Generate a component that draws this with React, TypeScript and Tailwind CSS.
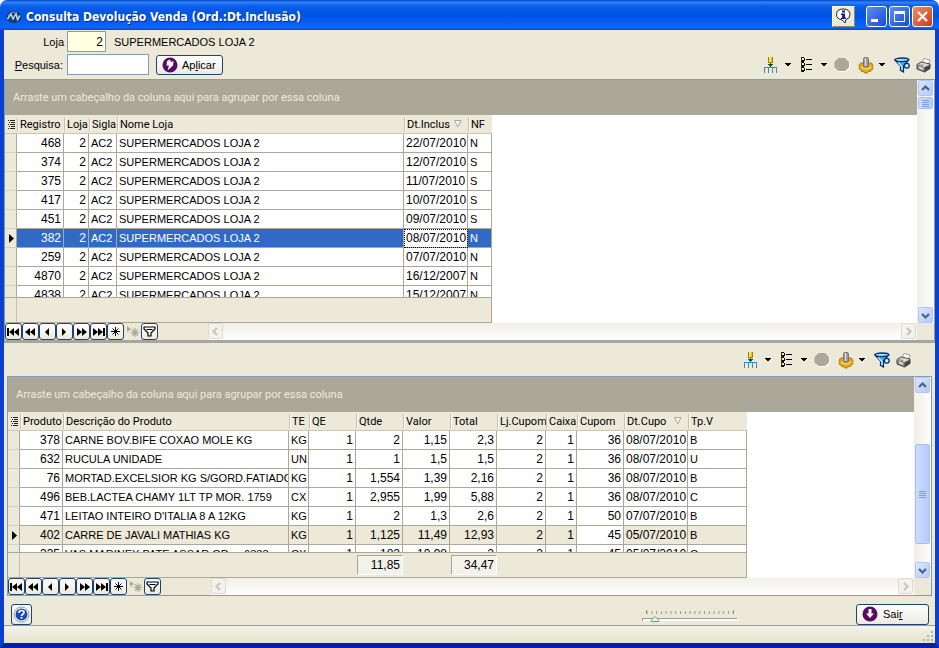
import React from 'react';
import clsx from 'clsx';

type Column = {
    label: string;
    width: string;
    align?: 'right';
    sorted?: boolean;
    total?: string;
};

const salesColumns: Column[] = [
    { label: 'Registro', width: 'w-[47px]', align: 'right' },
    { label: 'Loja', width: 'w-[25px]', align: 'right' },
    { label: 'Sigla', width: 'w-[28px]' },
    { label: 'Nome Loja', width: 'w-[287px]' },
    { label: 'Dt.Inclus', width: 'w-[64px]', sorted: true },
    { label: 'NF', width: 'w-[24px]' },
];

const salesRows = [
    ['468', '2', 'AC2', 'SUPERMERCADOS LOJA 2', '22/07/2010', 'N'],
    ['374', '2', 'AC2', 'SUPERMERCADOS LOJA 2', '12/07/2010', 'S'],
    ['375', '2', 'AC2', 'SUPERMERCADOS LOJA 2', '11/07/2010', 'S'],
    ['417', '2', 'AC2', 'SUPERMERCADOS LOJA 2', '10/07/2010', 'S'],
    ['451', '2', 'AC2', 'SUPERMERCADOS LOJA 2', '09/07/2010', 'S'],
    ['382', '2', 'AC2', 'SUPERMERCADOS LOJA 2', '08/07/2010', 'N'],
    ['259', '2', 'AC2', 'SUPERMERCADOS LOJA 2', '07/07/2010', 'N'],
    ['4870', '2', 'AC2', 'SUPERMERCADOS LOJA 2', '16/12/2007', 'N'],
    ['4838', '2', 'AC2', 'SUPERMERCADOS LOJA 2', '15/12/2007', 'N'],
];

const itemColumns: Column[] = [
    { label: 'Produto', width: 'w-[43px]', align: 'right' },
    { label: 'Descrição do Produto', width: 'w-[226px]' },
    { label: 'TE', width: 'w-[20px]' },
    { label: 'QE', width: 'w-[47px]', align: 'right' },
    { label: 'Qtde', width: 'w-[47px]', align: 'right', total: '11,85' },
    { label: 'Valor', width: 'w-[47px]', align: 'right' },
    { label: 'Total', width: 'w-[47px]', align: 'right', total: '34,47' },
    { label: 'Lj.Cupom', width: 'w-[49px]', align: 'right' },
    { label: 'Caixa', width: 'w-[31px]', align: 'right' },
    { label: 'Cupom', width: 'w-[47px]', align: 'right' },
    { label: 'Dt.Cupo', width: 'w-[64px]', sorted: true },
    { label: 'Tp.V', width: 'w-[59px]' },
];

const itemRows = [
    ['378', 'CARNE BOV.BIFE COXAO MOLE KG', 'KG', '1', '2', '1,15', '2,3', '2', '1', '36', '08/07/2010', 'B'],
    ['632', 'RUCULA UNIDADE', 'UN', '1', '1', '1,5', '1,5', '2', '1', '36', '08/07/2010', 'U'],
    ['76', 'MORTAD.EXCELSIOR KG S/GORD.FATIADO', 'KG', '1', '1,554', '1,39', '2,16', '2', '1', '36', '08/07/2010', 'B'],
    ['496', 'BEB.LACTEA CHAMY 1LT TP MOR. 1759', 'CX', '1', '2,955', '1,99', '5,88', '2', '1', '36', '08/07/2010', 'C'],
    ['471', "LEITAO INTEIRO D'ITALIA 8 A 12KG", 'KG', '1', '2', '1,3', '2,6', '2', '1', '50', '07/07/2010', 'B'],
    ['402', 'CARRE DE JAVALI MATHIAS KG', 'KG', '1', '1,125', '11,49', '12,93', '2', '1', '45', '05/07/2010', 'B'],
    ['335', 'VAS MARINEX PATE ASSAR GD \u00a0\u00a0\u00a0 6333', 'CX', '1', '182', '10,98', '2', '2', '1', '45', '05/07/2010', 'C'],
];

/* ---------- icons ---------- */

const Caret = () => (
    <svg width="8" height="4" viewBox="0 0 8 4" shapeRendering="crispEdges">
        <path d="M1 0h6v1H1zM2 1h4v1H2zM3 2h2v1H3z" fill="#000" />
    </svg>
);

const GroupIcon = () => (
    <svg width="16" height="18" viewBox="0 0 16 18" shapeRendering="crispEdges">
        <path d="M6 1h5v6H6z" fill="#e8b820" />
        <path d="M7 1h2v5H7z" fill="#ffe860" />
        <path d="M6 1h1v6H6zM10 1h1v6h-1zM7 6h3v1H7z" fill="#a87818" />
        <path d="M8 7h1v5H8zM6 8h5v1H6zM7 9h3v1H7z" fill="#0b5b20" />
        <path d="M2 11h13v1H2zM2 12h1v5H2zM6 12h1v5H6zM10 12h1v5h-1zM14 12h1v5h-1z" fill="#2f8fc4" />
    </svg>
);

const ListIcon = () => (
    <svg width="16" height="18" viewBox="0 0 16 18" shapeRendering="crispEdges">
        {[1, 6, 11].map((y) => (
            <g key={y}>
                <path d={`M3 ${y}h3v1h1v3h-1v1h-3z`} fill="#000" />
                <path d={`M4 ${y + 1}h2v2h-2z`} fill="#ffff40" />
                <path d={`M8 ${y + 2}h6v1h-6z`} fill="#000" />
            </g>
        ))}
        <path d="M3 1h1v15H3z" fill="#333" />
    </svg>
);

const StopIcon = () => (
    <svg width="16" height="16" viewBox="0 0 16 16">
        <path d="M5 2h7l4 4v5l-4 4H5l-3-3V5z" fill="#fff" />
        <path d="M4.500 1h6.500l4 4v5.500l-4 3.500H4.500L.5 10.500V5z" fill="#aca899" />
    </svg>
);

const GearIcon = () => (
    <svg width="16" height="18" viewBox="0 0 16 18">
        <path
            d="M1 9.500l1.500-2.500h2L6 5.500h4L11.500 7h2L15 9.500l-.5 2 .5 1.500-2 1-.5 1.500h-2L9.500 17h-3l-1-1.500h-2L3 14l-2-1 .5-1.500z"
            fill="#e5a81c"
            stroke="#a06a08"
            strokeWidth="0.8"
        />
        <path d="M3 11q5 4 10 0" stroke="#ffe27a" strokeWidth="1.200" fill="none" />
        <rect x="5.500" y="1.500" width="5" height="9.500" rx="1.500" fill="#9a9a9a" stroke="#666" strokeWidth="0.8" />
        <path d="M7.500 2v8" stroke="#ddd" strokeWidth="1.200" />
    </svg>
);

const FilterIcon = () => (
    <svg width="16" height="16" viewBox="0 0 16 16">
        <path d="M1 3l5.500 6v4.500l3 1.500V9l5-6z" fill="#38b6e8" stroke="#082a70" strokeWidth="1.200" />
        <path d="M4 5l4 5v3" stroke="#c7f4ff" strokeWidth="1.300" fill="none" />
        <ellipse cx="7.800" cy="2.800" rx="7" ry="1.800" fill="#8be0f5" stroke="#082a70" strokeWidth="1.300" />
        <circle cx="12.800" cy="8.800" r="2.400" stroke="#082a70" strokeWidth="1.300" fill="#dff3fb" />
    </svg>
);

const PrinterIcon = () => (
    <svg width="16" height="16" viewBox="0 0 16 16">
        <path d="M6 6l2-4.500 6 1.500-1.500 5z" fill="#fff" stroke="#888" strokeWidth="0.8" />
        <path d="M1 7.500l4-2.500 9 2v4.500L8.500 15 1 12z" fill="#8d8d8d" stroke="#333" strokeWidth="0.9" />
        <path d="M1.500 7.500l4-2 8 2-5 2.500z" fill="#d8d8d8" />
        <path d="M8.500 10.500V15l5.500-3.500V8z" fill="#444" />
        <path d="M3 9.500l4 1.500v2L3 11.500z" fill="#ddd" />
        <rect x="3" y="7" width="1.500" height="1.200" fill="#3c3" />
        <rect x="5.500" y="7.800" width="1.500" height="1.200" fill="#e33" />
    </svg>
);

const ColumnsIcon = () => (
    <svg width="7" height="9" viewBox="0 0 7 9" shapeRendering="crispEdges">
        <path d="M0 0h1v1H0zM2 0h5v1H2zM1 2h1v1H1zM3 2h4v1H3zM0 4h1v1H0zM2 4h5v1H2zM1 6h1v1H1zM3 6h4v1H3zM0 8h1v1H0zM2 8h5v1H2z" fill="#222" />
    </svg>
);

const SortIcon = () => (
    <svg width="8" height="8" viewBox="0 0 8 8" className="mr-[6px] shrink-0">
        <path d="M.5 .5h6.500l-3.200 6.500z" fill="#f8f7f0" stroke="#aca899" />
    </svg>
);

const AppIcon = () => (
    <svg width="16" height="16" viewBox="0 0 16 16">
        <ellipse cx="8" cy="8" rx="7.500" ry="6" fill="#163a6c" />
        <path d="M1.500 10l3.500-5 2 5 3-5.500 1.500 6L14 6.500" stroke="#b9dcf5" strokeWidth="1.500" fill="none" />
        <path d="M2 6.500q3-4 7-3.500" stroke="#7fa8d8" fill="none" />
    </svg>
);

const Chevron = ({ dir, off }: { dir: 'up' | 'down' | 'left' | 'right'; off?: boolean }) => {
    const d = {
        up: 'M1 6l3.500-3.500L8 6',
        down: 'M1 3l3.500 3.500L8 3',
        left: 'M6 1L2.500 4.500 6 8',
        right: 'M3 1l3.500 3.500L3 8',
    }[dir];
    return (
        <svg width="9" height="9" viewBox="0 0 9 9">
            <path d={d} fill="none" stroke={off ? '#c9c7ba' : '#4d6185'} strokeWidth="2.200" />
        </svg>
    );
};

/* ---------- navigator ---------- */

const navButtons = [
    { name: 'Primeiro', d: 'M0 1h2v8H0zM2 5l5-4v8zM7 5l5-4v8z' },
    { name: 'Página anterior', d: 'M1 5l5-4v8zM6 5l5-4v8z' },
    { name: 'Anterior', d: 'M4 5l4-4v8z' },
    { name: 'Próximo', d: 'M8 5L4 1v8z' },
    { name: 'Próxima página', d: 'M7 5L2 1v8zM12 5L7 1v8z' },
    { name: 'Último', d: 'M11 1h2v8h-2zM11 5L6 1v8zM6 5L1 1v8z' },
];

const navClass =
    'flex h-[17px] w-[17px] shrink-0 items-center justify-center rounded-[3px] border border-[#1c4470] bg-gradient-to-b from-white to-[#eceadf]';

const Navigator = () => (
    <div className="flex w-[203px] shrink-0">
        {navButtons.map((b) => (
            <button key={b.name} type="button" aria-label={b.name} className={navClass}>
                <svg width="13" height="10" viewBox="0 0 13 10" className="shrink-0">
                    <path d={b.d} fill="#000" />
                </svg>
            </button>
        ))}
        <button type="button" aria-label="Marcar" className={navClass}>
            <svg width="9" height="9" viewBox="0 0 9 9">
                <path d="M4.500 0v9M0 4.500h9M1.500 1.500l6 6M7.500 1.500l-6 6" stroke="#000" />
            </svg>
        </button>
        <button type="button" aria-label="Ir para marca" disabled className="flex h-[17px] w-[17px] items-center justify-center">
            <svg width="14" height="12" viewBox="0 0 14 12">
                <path d="M1 0l4 3-4 3z" fill="#aca899" />
                <path d="M9 2v9M4.500 6.500h9M6 3.500l6 6M12 3.500l-6 6" stroke="#aca899" strokeWidth="1.200" />
            </svg>
        </button>
        <button type="button" aria-label="Filtrar" className={navClass}>
            <svg width="13" height="11" viewBox="0 0 13 11" className="shrink-0">
                <path d="M1 1h11v2L8 7v3H5V7L1 3zM3.500 3.500h6" fill="none" stroke="#000" strokeWidth="1.200" />
            </svg>
        </button>
    </div>
);

/* ---------- scroll bars ---------- */

const ScrollButton = ({ dir, off }: { dir: 'up' | 'down' | 'left' | 'right'; off?: boolean }) => (
    <button
        type="button"
        aria-label={dir}
        className={clsx(
            'flex h-4 w-[15px] shrink-0 items-center justify-center rounded-[2px] border',
            off ? 'border-[#dddbd0] bg-[#f3f2ec]' : 'border-[#b3c6f3] bg-gradient-to-br from-[#dde7ff] to-[#b5c9f9]',
        )}
    >
        <Chevron dir={dir} off={off} />
    </button>
);

const VerticalScroll = ({ before, thumb, after }: { before: string; thumb: string; after: string }) => (
    <div className="flex w-[17px] shrink-0 flex-col items-center bg-gradient-to-r from-[#f0efe8] to-[#fdfdfb]">
        <ScrollButton dir="up" />
        <div className={before} />
        <div
            className={clsx(
                'flex w-[15px] flex-col items-center justify-center gap-px rounded-[2px] border border-[#a9bdf0] bg-gradient-to-r from-[#cddcff] to-[#b7cafa]',
                thumb,
            )}
        >
            {[0, 1, 2, 3].map((i) => (
                <div key={i} className="h-px w-[7px] bg-[#7f9fe8]" />
            ))}
        </div>
        <div className={after} />
        <ScrollButton dir="down" />
    </div>
);

const BottomRow = () => (
    <div className="flex h-[17px] shrink-0 bg-[#ece9d8] pr-[17px]">
        <Navigator />
        <div className="flex grow justify-between bg-gradient-to-b from-[#f0efe8] to-white pr-px">
            <ScrollButton dir="left" off />
            <ScrollButton dir="right" off />
        </div>
    </div>
);

/* ---------- grid ---------- */

type GridProps = {
    label: string;
    columns: Column[];
    rows: string[][];
    tableWidth: string;
    current: number;
    focusCol: number;
    selected?: boolean;
};

const Grid = ({ label, columns, rows, tableWidth, current, focusCol, selected }: GridProps) => (
    <div className="flex min-w-0 grow flex-col bg-white">
        <div className="flex h-[35px] shrink-0 items-center bg-[#aca899] px-2 pt-[2px] font-[Roboto,sans-serif] text-[11px] text-[#ece9d8]">
            Arraste um cabeçalho da coluna aqui para agrupar por essa coluna
        </div>
        <div className="min-h-0 grow overflow-hidden">
            <table aria-label={label} className={clsx('table-fixed border-separate border-spacing-0', tableWidth)}>
                <thead>
                    <tr className="h-[19px] bg-[#ece9d8] font-[Roboto,sans-serif]">
                        <th className="w-3 border-b border-[#cbc7b8] p-0 pl-[3px]">
                            <ColumnsIcon />
                        </th>
                        {columns.map((c) => (
                            <th key={c.label} className={clsx('border-b border-[#cbc7b8] p-0 text-left text-[11px] font-normal', c.width)}>
                                <div className="flex h-[15px] items-center border-l border-[#c5c1b0] pl-[2px] leading-[15px] shadow-[inset_1px_0_0_#fff]">
                                    <span className="grow overflow-hidden whitespace-nowrap">{c.label}</span>
                                    {c.sorted && <SortIcon />}
                                </div>
                            </th>
                        ))}
                    </tr>
                </thead>
                <tbody>
                    {rows.map((row, r) => (
                        <tr
                            key={row[0]}
                            className={clsx('h-[19px]', r === current && (selected ? 'bg-[#316ac5] text-white' : 'bg-[#ece9d8]'))}
                        >
                            <td className="border-r border-b border-[#aca899] border-b-[#d6d2c2] bg-[#ece9d8] p-0">
                                {r === current && (
                                    <svg width="6" height="9" viewBox="0 0 6 9" className="ml-1">
                                        <path d="M0 0l5 4.500L0 9z" fill="#000" />
                                    </svg>
                                )}
                            </td>
                            {row.map((value, i) => (
                                <td
                                    key={i}
                                    className={clsx(
                                        'overflow-hidden border-r border-b border-[#aca899] p-0 pl-[2px] leading-[18px] whitespace-nowrap',
                                        /[a-z]/i.test(value) ? 'text-[11px]' : 'text-[12px]',
                                        columns[i].align === 'right' && 'pr-[2px] text-right',
                                        r === current && i === focusCol && 'bg-white text-black',
                                        r === current && i === focusCol && selected && 'outline-1 -outline-offset-1 outline-dotted outline-black',
                                    )}
                                >
                                    {value}
                                </td>
                            ))}
                        </tr>
                    ))}
                </tbody>
            </table>
        </div>
        <div className={clsx('flex h-[26px] shrink-0 border-y border-r border-[#aca899] bg-[#ece9d8]', tableWidth)}>
            <div className="w-3 shrink-0 border-r border-[#c5c1b0]" />
            {columns.map((c) => (
                <div key={c.label} className={clsx('shrink-0 py-[2px] pl-px', c.width)}>
                    {c.total && (
                        <div className="h-5 border border-[#aca899] border-r-white border-b-white bg-[#f2f1ea] pr-[2px] text-right text-[12px] leading-[18px]">
                            {c.total}
                        </div>
                    )}
                </div>
            ))}
        </div>
    </div>
);

const Toolbar = () => (
    <div className="flex items-center">
        <button type="button" aria-label="Agrupar"><GroupIcon /></button>
        <button type="button" aria-label="Opções de grupo" className="mx-[6px]"><Caret /></button>
        <button type="button" aria-label="Colunas"><ListIcon /></button>
        <button type="button" aria-label="Opções de colunas" className="mx-[6px]"><Caret /></button>
        <button type="button" aria-label="Parar" className="mr-2"><StopIcon /></button>
        <button type="button" aria-label="Configurar"><GearIcon /></button>
        <button type="button" aria-label="Opções de configuração" className="mr-2 ml-1"><Caret /></button>
        <button type="button" aria-label="Filtro" className="mr-[6px]"><FilterIcon /></button>
        <button type="button" aria-label="Imprimir"><PrinterIcon /></button>
    </div>
);

const TitleBar = () => (
    <header className="flex h-[30px] shrink-0 items-center rounded-t-[7px] bg-[linear-gradient(180deg,#0a48c8_0%,#2a82f8_8%,#0a5ee8_20%,#0054e3_50%,#0862f5_82%,#0a66fa_92%,#0046cc_100%)] pt-[3px] pr-[6px] pl-[6px]">
        <AppIcon />
        <h1 className="ml-1 grow font-['DejaVu_Sans_Condensed','DejaVu_Sans',sans-serif] text-[12px] font-bold whitespace-nowrap text-white [text-shadow:1px_1px_0_#0a2a80]">
            Consulta Devolução Venda (Ord.:Dt.Inclusão)
        </h1>
        <button type="button" aria-label="Informações" className="mr-[11px] flex h-[21px] w-[23px] items-center justify-center border border-white border-r-[#8a8778] border-b-[#8a8778] bg-[#ece9d8]">
            <svg width="17" height="17" viewBox="0 0 17 17">
                <path d="M8 1q7 0 7 5.500 0 4-4 5L10 15l-3-3.200Q1.500 11 1.500 6.500 1.500 1 8 1z" fill="#fff" stroke="#222" />
                <path d="M7 2.500h3v2H7zM6 5.500h4v4h1v1.500H6V9.500h1.200V7H6z" fill="#1018a0" />
            </svg>
        </button>
        <div className="flex gap-[2px]">
            <button type="button" aria-label="Minimizar" className="h-[21px] w-[21px] rounded-[3px] border border-white bg-gradient-to-br from-[#5a8cf5] to-[#1a4cd0]">
                <svg width="19" height="19" viewBox="0 0 19 19"><path d="M4 12h7v3H4z" fill="#fff" /></svg>
            </button>
            <button type="button" aria-label="Maximizar" className="h-[21px] w-[21px] rounded-[3px] border border-white bg-gradient-to-br from-[#5a8cf5] to-[#1a4cd0]">
                <svg width="19" height="19" viewBox="0 0 19 19"><path d="M4 4h11v11H4zM5 7v7h9V7z" fill="#fff" fillRule="evenodd" /></svg>
            </button>
            <button type="button" aria-label="Fechar" className="h-[21px] w-[21px] rounded-[3px] border border-white bg-gradient-to-br from-[#f08a68] to-[#c83a10]">
                <svg width="19" height="19" viewBox="0 0 19 19"><path d="M5 5l9 9M14 5l-9 9" stroke="#fff" strokeWidth="2.200" /></svg>
            </button>
        </div>
    </header>
);

const buttonClass =
    'flex items-center rounded-[3px] border border-[#1c4470] bg-gradient-to-b from-white to-[#eceadf] text-[11px]';

export default function App() {
    return (
        <div className="flex h-screen flex-col overflow-hidden bg-white font-['Liberation_Sans',Arial,sans-serif] text-black">
            <TitleBar />
            <div className="flex min-h-0 grow flex-col border-x-4 border-b-[5px] border-[#0a3fd0] border-b-[#0a1fa8] bg-[#ece9d8]">
                <div className="flex h-[49px] shrink-0 items-end justify-between pr-[3px]">
                    <form className="flex flex-col gap-[2px] self-start pt-px text-[11px]">
                        <div className="flex h-[21px] items-center">
                            <label htmlFor="loja" className="w-[63px] pt-[2px] pr-[3px] text-right">Loja</label>
                            <input id="loja" defaultValue="2" className="h-[21px] w-[39px] border border-[#7f9db9] bg-[#ffffe1] pr-[2px] text-right text-[12px]" />
                            <span className="ml-2 pt-[2px]">SUPERMERCADOS LOJA 2</span>
                        </div>
                        <div className="flex h-[21px] items-center">
                            <label htmlFor="pesquisa" className="w-[63px] pt-[2px] pr-[4px] text-right">
                                <u>P</u>esquisa:
                            </label>
                            <input id="pesquisa" className="h-[21px] w-[82px] border border-[#7f9db9] bg-white px-1" />
                            <button type="button" className={clsx(buttonClass, 'ml-[7px] h-5 w-[67px] gap-1 pl-[5px]')}>
                                <svg width="16" height="16" viewBox="0 0 16 16">
                                    <circle cx="8" cy="8" r="7.500" fill="#5a0a62" />
                                    <path d="M8 2.500L5 4 4.500 8.500h2.500L5.500 13.500 11 8.500 11.500 4 9 5z" fill="#fff" />
                                </svg>
                                <span className="pt-px">Ap<u>l</u>icar</span>
                            </button>
                        </div>
                    </form>
                    <div className="pb-[5px]">
                        <Toolbar />
                    </div>
                </div>

                <section className="flex min-h-0 flex-[260] flex-col border border-b-0 border-[#7f9db9]">
                    <div className="flex min-h-0 grow">
                        <Grid
                            label="Devoluções"
                            columns={salesColumns}
                            rows={salesRows}
                            tableWidth="w-[487px]"
                            current={5}
                            focusCol={4}
                            selected
                        />
                        <VerticalScroll before="h-px" thumb="h-3" after="grow" />
                    </div>
                    <BottomRow />
                </section>

                <div className="flex h-9 shrink-0 items-center justify-end border-t-[3px] border-[#a3a79f] pr-[23px]">
                    <Toolbar />
                </div>

                <section className="mx-[3px] flex min-h-0 flex-[218] flex-col border border-[#7f9db9]">
                    <div className="flex min-h-0 grow">
                        <Grid
                            label="Itens"
                            columns={itemColumns}
                            rows={itemRows}
                            tableWidth="w-[739px]"
                            current={5}
                            focusCol={9}
                        />
                        <VerticalScroll before="flex-[51]" thumb="flex-[98]" after="flex-[18]" />
                    </div>
                    <BottomRow />
                </section>

                <div className="flex h-[30px] shrink-0 items-center border-b border-[#9d9a8b] pt-[7px] pr-[6px] pl-[7px]">
                    <button type="button" aria-label="Ajuda" className={clsx(buttonClass, 'h-[21px] w-[21px] justify-center')}>
                        <svg width="17" height="17" viewBox="0 0 17 17" className="shrink-0">
                            <circle cx="8.500" cy="8.500" r="7.500" fill="#fff" stroke="#8a9cc0" />
                            <circle cx="8.500" cy="8.500" r="6" fill="#1c48b8" />
                            <path d="M6 7q0-2.500 2.500-2.500T11 6.500q0 1-1.200 1.700T8.500 10" stroke="#fff" strokeWidth="1.700" fill="none" />
                            <path d="M7.600 11h1.800v1.700H7.600z" fill="#fff" />
                        </svg>
                    </button>
                    <label className="relative mr-[118px] ml-auto h-[15px] w-24">
                        <input type="range" aria-label="Zoom" defaultValue="10" className="absolute inset-0 h-full w-full opacity-0" />
                        <svg viewBox="0 0 96 15" className="h-full w-full">
                            <path d="M4.500 5.500h88" stroke="#9d9a8b" strokeWidth="3" strokeDasharray="1 3.790" />
                            <path d="M4 3h1v4H4zM91 3h1v4h-1z" fill="#8d8a7c" />
                            <path d="M0 11h95v1H1v2H0z" fill="#9d9a8b" />
                            <path d="M1 12h95v2H1z" fill="#fff" />
                            <path d="M9 14.500v-1l4-4 4 4v1z" fill="#f4f3ee" stroke="#5faa6a" />
                        </svg>
                    </label>
                    <button type="button" className={clsx(buttonClass, 'h-[21px] w-[73px] gap-[5px] pl-[5px]')}>
                        <svg width="16" height="16" viewBox="0 0 16 16">
                            <circle cx="8" cy="8" r="7.500" fill="#5a0a62" />
                            <path d="M6.500 3h3v4.500H12L8 12 4 7.500h2.500z" fill="#fff" />
                        </svg>
                        <span className="pt-px">Sai<u>r</u></span>
                    </button>
                </div>
                <footer className="flex h-[17px] shrink-0 items-end justify-end bg-gradient-to-b from-[#f5f4ec] via-[#ece9d8] to-[#e6e3d0] pr-px pb-px">
                    <svg width="12" height="12" viewBox="0 0 12 12" shapeRendering="crispEdges">
                        <path d="M9 1h2v2H9zM5 5h2v2H5zM9 5h2v2H9zM1 9h2v2H1zM5 9h2v2H5zM9 9h2v2H9z" fill="#b8b4a2" />
                    </svg>
                </footer>
            </div>
        </div>
    );
}
